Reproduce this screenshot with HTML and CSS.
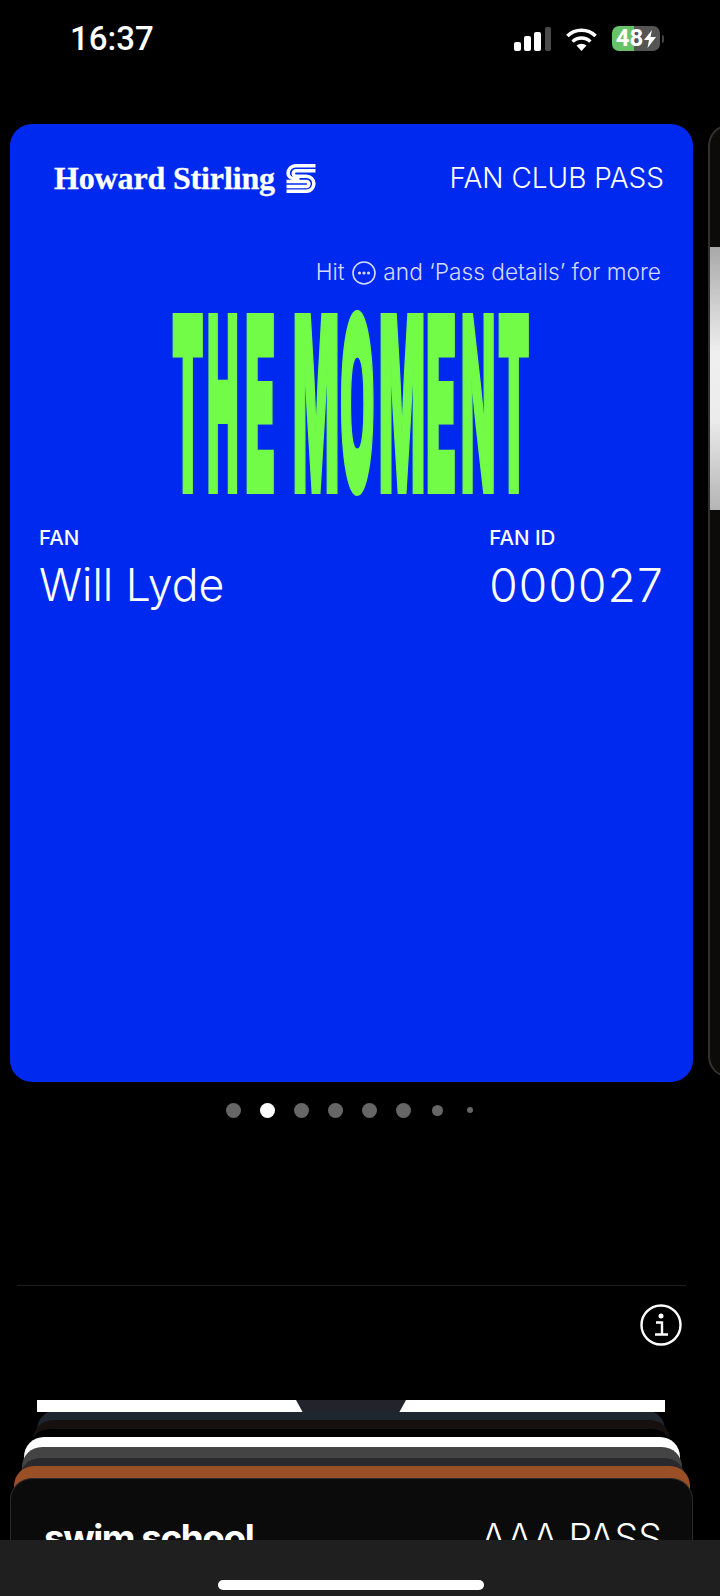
FILE: index.html
```html
<!DOCTYPE html>
<html lang="en">
  <head>
    <meta charset="UTF-8" />
    <meta name="viewport" content="width=device-width, initial-scale=1.0" />
    <title>Wallet</title>
    <link rel="stylesheet" href="styles.css">
  </head>
  <body>
    <div class="screen">
      <div class="status">
        <div class="time">16:37</div>
        <div class="status-icons">
          <svg class="signal" width="38" height="24" viewBox="0 0 38 24">
            <rect x="0" y="15" width="7" height="9" rx="2" fill="#fff" />
            <rect x="10" y="9" width="7" height="15" rx="2" fill="#fff" />
            <rect x="20" y="5" width="7" height="19" rx="2" fill="#fff" />
            <rect x="31" y="0" width="6" height="24" rx="2" fill="#4a4a4a" />
          </svg>
          <svg class="wifi" width="33" height="24" viewBox="0 0 33 24">
            <path d="M16.5 24 L11.5 18.6 A7.4 7.4 0 0 1 21.5 18.6 Z" fill="#fff" />
            <path d="M7.6 14.6 A12.8 12.8 0 0 1 25.4 14.6" fill="none" stroke="#fff" stroke-width="3.4" />
            <path d="M2.4 9 A20 20 0 0 1 30.6 9" fill="none" stroke="#fff" stroke-width="3.6" />
          </svg>
          <div class="battery">
            <span class="battery-level">48</span>
            <svg width="12" height="18" viewBox="0 0 12 18" class="bolt">
              <path d="M8 0 L0 10 H5 L3.5 18 L12 7 H6.5 Z" fill="#fff" />
            </svg>
          </div>
          <div class="battery-nub"></div>
        </div>
      </div>

      <div class="carousel">
        <div class="pass">
          <div class="pass-top">
            <div class="brand">
              <span>Howard Stirling</span>
              <svg width="30" height="29" viewBox="0 0 29 29">
                <path d="M29 1.8 H9 A7.4 7.4 0 0 0 1.6 9.2 A5.2 5.2 0 0 0 6.8 14.4 H13" fill="none" stroke="#fff" stroke-width="3.5" />
                <path d="M29 6.8 H9.5 A2.7 2.7 0 0 0 9.5 12.2 H20 A7.4 7.4 0 0 1 27.4 19.6 A7.8 7.8 0 0 1 20 27.3 H0" fill="none" stroke="#fff" stroke-width="3.5" />
                <path d="M0 17.6 H20 A2.4 2.4 0 0 1 20 22.4 H0" fill="none" stroke="#fff" stroke-width="3.5" />
              </svg>
            </div>
            <div class="pass-type">FAN CLUB PASS</div>
          </div>

          <div class="hint">
            Hit
            <svg class="hint-icon" width="24" height="24" viewBox="0 0 24 24">
              <circle cx="12" cy="12" r="11" fill="none" stroke="#d5dafc" stroke-width="1.6" />
              <circle cx="7.5" cy="12" r="1.6" fill="#d5dafc" />
              <circle cx="12" cy="12" r="1.6" fill="#d5dafc" />
              <circle cx="16.5" cy="12" r="1.6" fill="#d5dafc" />
            </svg>
            and ‘Pass details’ for more
          </div>

          <div class="headline">
            <span class="ltr ltr-t">T</span>
            <span class="ltr ltr-h">H</span>
            <span class="ltr ltr-e">E</span>
            <span class="ltr ltr-m">M</span>
            <span class="ltr ltr-o">O</span>
            <span class="ltr ltr-m">M</span>
            <span class="ltr ltr-e2">E</span>
            <span class="ltr ltr-n">N</span>
            <span class="ltr ltr-t">T</span>
          </div>

          <div class="fields">
            <div class="field">
              <div class="field-label">FAN</div>
              <div class="field-value">Will Lyde</div>
            </div>
            <div class="field">
              <div class="field-label">FAN ID</div>
              <div class="field-value field-number">000027</div>
            </div>
          </div>
        </div>

        <div class="next-pass">
          <div class="next-pass-image"></div>
        </div>
      </div>

      <div class="dots">
        <span class="dot"></span>
        <span class="dot active"></span>
        <span class="dot"></span>
        <span class="dot"></span>
        <span class="dot"></span>
        <span class="dot"></span>
        <span class="dot small"></span>
        <span class="dot tiny"></span>
      </div>

      <div class="divider"></div>

      <div class="info-row">
        <svg width="42" height="42" viewBox="0 0 42 42">
          <circle cx="21" cy="21" r="19.5" fill="none" stroke="#fff" stroke-width="2.4" />
          <circle cx="21" cy="12" r="2.5" fill="#fff" />
          <path d="M16 18.5 H22 V30 M15 30.5 H28" fill="none" stroke="#fff" stroke-width="2.4" />
        </svg>
      </div>

      <div class="stack">
        <div class="stack-card card-white">
          <div class="notch"></div>
        </div>
        <div class="stack-card card-navy"></div>
        <div class="stack-card card-brown"></div>
        <div class="stack-card card-black"></div>
        <div class="stack-card card-light"></div>
        <div class="stack-card card-grey"></div>
        <div class="stack-card card-dark"></div>
        <div class="stack-card card-orange"></div>
        <div class="stack-card card-front">
          <span class="swim">swim school</span>
          <span class="aaa">AAA PASS</span>
        </div>
      </div>

      <div class="home-bar">
        <div class="home-indicator"></div>
      </div>
    </div>
  </body>
</html>
```

FILE: styles.css
```css
html,
body {
  margin: 0;
  background: #000;
}

.screen {
  width: 720px;
  height: 1596px;
  display: flex;
  flex-direction: column;
  overflow: hidden;
  font-family: Inter, "Liberation Sans", sans-serif;
  color: #fff;
}

/* status bar */
.status {
  height: 124px;
  flex: none;
  box-sizing: border-box;
  display: flex;
  justify-content: space-between;
  align-items: flex-start;
  padding: 19px 56px 0 70px;
}

.time {
  font-family: Roboto, sans-serif;
  font-size: 33px;
  font-weight: 500;
  line-height: 40px;
}

.status-icons {
  display: flex;
  align-items: center;
  margin-top: 7px;
}

.signal {
  margin-right: 13px;
}

.wifi {
  margin-right: 14px;
}

.battery {
  width: 48px;
  height: 25px;
  border-radius: 7px;
  display: flex;
  align-items: center;
  justify-content: center;
  gap: 1px;
  background: linear-gradient(90deg, #68c268 46%, #555 46%);
}

.battery-level {
  font-family: Roboto, sans-serif;
  font-size: 24px;
  font-weight: 700;
  line-height: 25px;
}

.battery-nub {
  width: 2px;
  height: 8px;
  margin-left: 2px;
  border-radius: 0 2px 2px 0;
  background: #444;
}

/* pass carousel */
.carousel {
  flex: none;
  display: flex;
  gap: 15px;
  padding-left: 10px;
  height: 958px;
}

.pass {
  flex: none;
  box-sizing: border-box;
  width: 683px;
  height: 958px;
  padding: 0 29px;
  border-radius: 22px;
  background: #0029f0;
}

.pass-top {
  display: flex;
  justify-content: space-between;
  align-items: center;
  height: 32px;
  margin-top: 38px;
  padding-left: 15px;
}

.brand {
  display: flex;
  align-items: center;
  gap: 11px;
  font-family: "Liberation Serif", serif;
  font-size: 32px;
  font-weight: 700;
  letter-spacing: -0.15px;
  -webkit-text-stroke: 0.3px #fff;
}

.pass-type {
  font-size: 28px;
  font-weight: 300;
}

.hint {
  margin-top: 66px;
  padding-right: 3px;
  height: 24px;
  line-height: 24px;
  text-align: right;
  font-size: 22.7px;
  font-weight: 300;
  color: #d5dafc;
}

.hint-icon {
  vertical-align: -5px;
  margin: 0 1px;
}

.headline {
  display: flex;
  height: 181px;
  margin-top: 29px;
  margin-left: 133px;
  font-size: 241px;
  font-weight: 900;
  line-height: 181px;
  color: #72fb47;
  -webkit-text-stroke: 6px #72fb47;
}

.ltr {
  display: block;
  transform-origin: left center;
}

.ltr-t {
  width: 35px;
  transform: scaleX(0.19);
}

.ltr-t:last-child {
  width: 32px;
}

.ltr-h {
  width: 38px;
  transform: scaleX(0.175);
}

.ltr-e {
  width: 48px;
  transform: scaleX(0.205);
}

.ltr-m {
  width: 47px;
  transform: scaleX(0.2);
}

.ltr-m + .ltr-o {
  width: 39px;
}

.ltr-o {
  transform: scaleX(0.185);
}

.ltr-e2 {
  width: 35px;
  transform: scaleX(0.205);
}

.ltr-n {
  width: 37px;
  transform: scaleX(0.185);
}

.fields {
  display: flex;
  justify-content: space-between;
  margin-top: 32px;
}

.field-label {
  font-size: 20.5px;
  font-weight: 500;
  line-height: 24px;
}

.field-value {
  margin-top: 7px;
  font-size: 44.5px;
  font-weight: 300;
  line-height: 56px;
}

.field-number {
  font-size: 46px;
  letter-spacing: 1.2px;
}

.next-pass {
  flex: none;
  width: 100px;
  height: 954px;
  box-sizing: border-box;
  border: 2px solid #333030;
  border-right: none;
  border-radius: 22px 0 0 22px;
  background: #0d0a0a;
  padding-top: 121px;
}

.next-pass-image {
  height: 263px;
  background: linear-gradient(180deg, #a8a8a8, #efefef 40%, #ececec 65%, #b4b4b4);
}

/* page dots */
.dots {
  flex: none;
  display: flex;
  align-items: center;
  justify-content: center;
  gap: 19px;
  height: 16px;
  margin-top: 20px;
  padding-right: 18px;
}

.dot {
  flex: none;
  width: 15px;
  height: 15px;
  border-radius: 50%;
  background: #666;
}

.dot.active {
  background: #fff;
}

.dot.small {
  width: 11px;
  height: 11px;
  margin: 0 2px;
}

.dot.tiny {
  width: 6px;
  height: 6px;
  margin: 0 3px;
}

.divider {
  flex: none;
  height: 1px;
  margin: 167px 34px 0 17px;
  background: #1e1e1e;
}

.info-row {
  flex: none;
  display: flex;
  justify-content: flex-end;
  padding: 18px 38px 0 0;
}

/* stacked passes at the bottom */
.stack {
  flex: none;
  margin-top: 54px;
  height: 140px;
  overflow: hidden;
}

.stack-card {
  height: 60px;
  border-radius: 20px 20px 0 0;
}

.card-white {
  position: relative;
  height: 12px;
  margin: 0 55px 0 37px;
  border-radius: 0;
  background: #fff;
}

.notch {
  position: absolute;
  top: 0;
  left: 259px;
  width: 110px;
  height: 12px;
  background: #23232b;
  clip-path: polygon(0 0, 100% 0, 94% 100%, 6% 100%);
}

.card-navy {
  margin: -2px 55px -50px 37px;
  background: #1e2630;
}

.card-brown {
  margin: 0 50px -51px 33px;
  background: #16110e;
}

.card-black {
  margin: 0 48px -52px 30px;
  background: #000;
}

.card-light {
  margin: 0 40px -50px 24px;
  background: #fff;
}

.card-grey {
  margin: 0 38px -49px 22px;
  background: #444;
}

.card-dark {
  margin: 0 35px -52px 20px;
  background: #2a2a2e;
}

.card-orange {
  margin: 0 30px -48px 14px;
  background: #9a4f26;
}

.card-front {
  display: flex;
  justify-content: space-between;
  box-sizing: border-box;
  height: 80px;
  margin: 0 27px 0 10px;
  padding: 37px 30px 0 33px;
  border: 1px solid #2a2a2a;
  border-bottom: none;
  border-radius: 22px 22px 0 0;
  background: #0b0b0b;
  font-size: 37.5px;
  line-height: 44px;
}

.swim {
  font-size: 37px;
  font-weight: 700;
  letter-spacing: -1.5px;
}

.aaa {
  font-weight: 300;
}

.home-bar {
  flex: 1;
  display: flex;
  justify-content: center;
  align-items: flex-end;
  padding: 0 18px 6px 0;
  background: #1f1f1f;
}

.home-indicator {
  width: 266px;
  height: 10px;
  border-radius: 5px;
  background: #fff;
}
```
